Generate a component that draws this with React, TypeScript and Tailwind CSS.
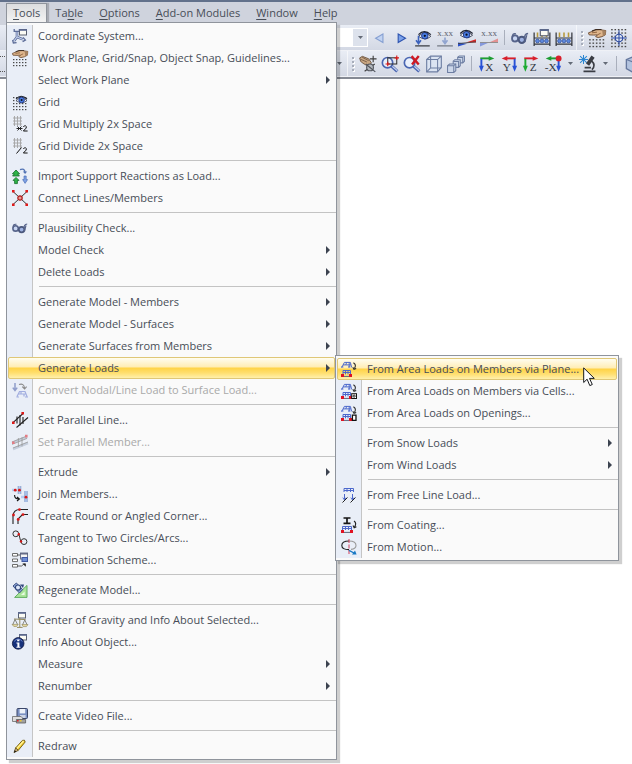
import type { ReactNode } from "react";
import clsx from "clsx";

const Icon = ({ children, size = 16 }: { children: ReactNode; size?: 16 | 18 }) => (
  <svg
    className={clsx("shrink-0 overflow-visible", size === 18 ? "size-[18px]" : "size-4")}
    viewBox="0 0 16 16"
    fill="none"
    aria-hidden="true"
  >
    {children}
  </svg>
);

/* shared fragments */

const Dots = ({ from = 6 }: { from?: number }) => (
  <g fill="#4a4a4a">
    {[0, 3, 6, 9, 12, 15]
      .filter((y) => y >= from)
      .map((y) =>
        [1, 4, 7, 10, 13].map((x) => <rect key={`${x}-${y}`} x={x} y={y} width="1.4" height="1.2" />),
      )}
  </g>
);

const Eye = ({ x = 0, y = 0 }: { x?: number; y?: number }) => (
  <g transform={`translate(${x} ${y})`}>
    <path d="M0 5.5Q5 0 11 5.5Q6 10 0 5.5Z" fill="#f4f6fb" stroke="#3a4050" strokeWidth=".8" />
    <circle cx="5.6" cy="5" r="2.8" fill="#4a7de0" stroke="#213a8c" strokeWidth=".9" />
    <circle cx="5.6" cy="5" r="1" fill="#0b1020" />
    <path d="M0 4Q5 -1.5 11 4" stroke="#1d2230" strokeWidth="1.1" />
  </g>
);

const Hand = () => (
  <>
    <path
      d="M0.4 3.4L3.5 2.2L7 0.8L10.5 0.6L15.8 1.4L15.4 5.2L12.4 6.8L9 7.6L6.8 6.8L8.4 5.2L5 5.4L1 5.2Z"
      fill="#dfb68c"
      stroke="#6a4a31"
      strokeWidth=".8"
    />
    <path d="M3.5 3.4L8 2.8M8.4 5.2L11.2 3.8" stroke="#8a5e3a" strokeWidth=".8" />
    <path d="M12.6 1L15.8 1.4V5L13.2 6.2Z" fill="#a78361" />
    <path d="M3.5 1.8L7 .5H12" stroke="#3c2b20" strokeWidth=".9" />
  </>
);

const Window = ({ x = 8, y = 1 }: { x?: number; y?: number }) => (
  <g transform={`translate(${x} ${y})`}>
    <rect x=".5" y=".5" width="7" height="5.5" fill="#fbfbf4" stroke="#5a6070" />
    <path d="M0 1h8" stroke="#5c6a92" strokeWidth="1.6" />
  </g>
);

const Glasses = () => (
  <>
    <circle cx="3.6" cy="8.4" r="2.7" fill="#c9d6f2" stroke="#56638a" strokeWidth="1.6" />
    <circle cx="9.6" cy="9.6" r="2.8" fill="#9eb2e2" stroke="#4a577c" strokeWidth="1.8" />
    <path
      d="M1.2 7.4Q1 3.6 4.4 4.4M6.2 8.2Q7 7 7.6 8.6M12.2 9Q11.4 4.4 15.2 4M12.4 11.6L14 5.4"
      stroke="#56638a"
      strokeWidth="1.2"
    />
  </>
);

const LoadFrame = () => (
  <>
    <path
      d="M.8 6.4L3.4 1.4H9.4L10.6 6.4M2 3.9H10M5.6 1.4L4.8 3.9M8.2 1.4V6.2M0 6h2.4M7 6h2.4"
      stroke="#4c68cc"
    />
    <path d="M2 13V9.5H9.5V13M2 11.5H9.5M4.5 9.5V13.4M7 9.5V13.4" stroke="#4c68cc" />
    <path d="M0 13h3v3H0zM8 13h3v3H8z" fill="#e01222" />
    <path d="M3 15.4h5" stroke="#5a6278" />
  </>
);

const Turn = () => (
  <path d="M12.4 1.8Q15.8 3.6 13.4 7.6M11.8 6.2L13 8.4L15.2 7.4" stroke="#2b2b2b" strokeWidth="1.1" />
);

const Grille = () => (
  <path d="M1 2h9M1 5h9M1 8h9M2.5 0v10M5.5 0v10M8.5 0v10" stroke="#a3a3a3" strokeWidth=".9" />
);

const Two = () => (
  <path d="M11.4 10.8Q12 9.6 13.4 9.8Q15.2 10.4 14 12.2L11.4 15H15.6" stroke="#111" />
);

const Floor = () => (
  <>
    <path d="M1 3v12M15 3v12M1 8h14M1 13.5h14" stroke="#33363e" strokeWidth="1.1" />
    <path d="M4 3v4M8 3v4M12 3v4" stroke="#b79a3d" strokeWidth="1.4" />
    <g fill="#5c88de" stroke="#2a4794" strokeWidth=".6">
      <circle cx="4" cy="10.6" r="1.7" />
      <circle cx="8" cy="10.6" r="1.7" />
      <circle cx="12" cy="10.6" r="1.7" />
    </g>
  </>
);

/* menu icons */

const icons = {
  coordinate: (
    <Icon>
      <path d="M5 9V3M5 9L11 11.4M5 9L2 13" stroke="#5c6c98" strokeWidth="2.6" />
      <path d="M5 9V3.4M5 9L11 11.4M5 9L2 13" stroke="#c5d2f0" strokeWidth="1.1" />
      <path d="M2.2 1V3.4H7.4V1M.6 12L1.4 15L4.6 14.6M11 9.4L13.4 12L10.6 13.6" stroke="#5c6c98" strokeWidth="1.3" />
      <Window x={7} y={1} />
    </Icon>
  ),
  workPlane: (
    <Icon>
      <Hand />
      <Dots from={9} />
    </Icon>
  ),
  grid: (
    <Icon>
      <Dots from={3} />
      <Eye x={4} y={1} />
    </Icon>
  ),
  gridMultiply: (
    <Icon>
      <Grille />
      <path d="M4.5 12.5h6M5.5 10.5l4 4M9.5 10.5l-4 4" stroke="#111" strokeWidth=".9" />
      <Two />
    </Icon>
  ),
  gridDivide: (
    <Icon>
      <Grille />
      <path d="M4.5 15.5L9.5 9.5" stroke="#111" />
      <Two />
    </Icon>
  ),
  importReactions: (
    <Icon>
      <path d="M4 2L7.6 5.8H5.6L7.4 8H.6L2.4 5.8H.4Z" fill="#2db648" stroke="#146b27" strokeWidth=".8" />
      <path d="M4 9.4L7 12.4H5.4V15.6H2.6V12.4H1Z" fill="#2db648" stroke="#146b27" strokeWidth=".8" />
      <path d="M8 1.6Q12.5 0 13 4" stroke="#5273b4" strokeWidth="1.4" />
      <path d="M10.8 3.4H15.2L13.1 6Z" fill="#5273b4" />
      <path d="M12 8H14.2V11.6H15.6L13.1 15.4L10.6 11.6H12Z" fill="#7fa2e4" stroke="#3c62ae" strokeWidth=".6" />
    </Icon>
  ),
  connect: (
    <Icon>
      <path d="M1 1.5L15 14.5M15 1.5L1 14.5" stroke="#333" />
      <circle cx="8" cy="8" r="2.2" fill="#e39a93" stroke="#b11a1a" strokeWidth="1.2" />
      <path d="M0 0h2.6v2.6H0zM13.4 0H16v2.6h-2.6zM0 13.4h2.6V16H0zM13.4 13.4H16V16h-2.6z" fill="#df1a1a" />
    </Icon>
  ),
  glasses: (
    <Icon>
      <Glasses />
    </Icon>
  ),
  convert: (
    <Icon>
      <path d="M3 1v7M0.8 5.6L3 8.6L5.2 5.6" stroke="#8f9dca" strokeWidth="1.5" />
      <path d="M7 2.5Q12 1 12.5 6M10.2 4.6L12.6 7L14.6 4.6" stroke="#8a8a8a" strokeWidth="1.1" />
      <path d="M5 14.5L7.5 9.5H13L15 14.5M6.4 12H14M9 9.5V12M12 12V14.5M4.4 15h2.6M13 15h3" stroke="#a2aee0" strokeWidth="1.2" />
    </Icon>
  ),
  parallelLine: (
    <Icon>
      <path d="M1 10.6L11 1.5M4.5 15.5L16 5.5" stroke="#222" strokeWidth="1.1" />
      <path d="M5 4.5V11.5M8 3V13.5M11 5V12" stroke="#222" strokeWidth="1.1" />
      <path d="M0 9.4h2.6V12H0zM9.4 0H12v2.6H9.4z" fill="#dc1818" />
    </Icon>
  ),
  parallelMember: (
    <Icon>
      <path d="M0 9L15 3M1 15L16 9" stroke="#c5cedd" strokeWidth="2.6" />
      <path d="M0 8L15 2M0 10.4L15 4.4M1 14L16 8M6.4 4V13M10 3.4V12.4" stroke="#9a9a9a" strokeWidth=".8" />
      <path d="M0 7.4h2.6V10H0zM13 0.8h2.6v2.6H13z" fill="#e27d85" />
    </Icon>
  ),
  join: (
    <Icon>
      <path d="M7.5 0v8M0 4h5M14 5v11M9 11h4" stroke="#b4cdf2" strokeWidth="2.4" />
      <path d="M6.2 0v8M8.8 0v8M12.8 5v11M15.2 5v11" stroke="#6f8abf" strokeWidth=".7" />
      <circle cx="3.2" cy="4.2" r="1.4" fill="#da1717" />
      <circle cx="7.4" cy="4.2" r="1.4" fill="#da1717" />
      <circle cx="14" cy="11.2" r="1.4" fill="#da1717" />
      <path d="M2.6 9Q2.4 13 7 13M5 11L7.4 13L5 15" stroke="#151515" strokeWidth="1.1" />
    </Icon>
  ),
  corner: (
    <Icon>
      <path d="M1 16V8Q1.5 1.5 8 1.5H16M6 16V11L10.5 6.5H16" stroke="#222" strokeWidth="1.1" />
      <g fill="#da1717">
        <circle cx="1.5" cy="7" r="1.4" />
        <circle cx="7.5" cy="1.6" r="1.4" />
        <circle cx="6.2" cy="11.4" r="1.4" />
        <circle cx="11" cy="6.6" r="1.4" />
      </g>
    </Icon>
  ),
  tangent: (
    <Icon>
      <circle cx="3.8" cy="3.8" r="2.9" stroke="#333" />
      <circle cx="12" cy="11.6" r="2.9" stroke="#333" />
      <path d="M6.6 3L9 12.5" stroke="#333" />
      <circle cx="6.8" cy="4.2" r="1.2" fill="#da1717" />
      <circle cx="9" cy="11.4" r="1.2" fill="#da1717" />
    </Icon>
  ),
  combination: (
    <Icon>
      <path d="M.5 1.5h5v2.6h-5zM.5 7h5v2.6h-5zM.5 12.5h5v2.6h-5z" fill="#fff" stroke="#5e5e5e" strokeWidth=".9" />
      <path d="M5.5 3H8M5.5 14H9.5L12.5 11.6" stroke="#4e4e4e" strokeWidth=".9" />
      <rect x="8.5" y="1" width="7" height="6" fill="#f5f5f5" stroke="#6d748c" />
      <path d="M8 1.8h8" stroke="#5d6480" strokeWidth="1.4" />
      <rect x="10" y="5.5" width="5.5" height="4" fill="#6c8cd6" stroke="#3f58a2" />
      <path d="M10.4 11.4h3.4V14.8z" fill="#222" />
    </Icon>
  ),
  regenerate: (
    <Icon>
      <path d="M15 3.4V15.4H2.6Z" fill="#a9e59a" stroke="#62ad62" />
      <path d="M12.6 9.4V13H9Z" fill="#eafbe4" />
      <path d="M1 4L4.4 1L10.6 7.6L7.4 11Z" fill="#8ea8d8" stroke="#3f5286" />
      <circle cx="6" cy="5.6" r="2.6" fill="#dde7f9" stroke="#33487e" strokeWidth="1.2" />
      <path d="M8 2.4L12 2.4L11 6" fill="#33487e" />
    </Icon>
  ),
  gravity: (
    <Icon>
      <Window x={6} y={0} />
      <path d="M2 7L13.6 7.6M7.8 5.6v9.6M5 15.4h5.6" stroke="#948a5c" />
      <path d="M3 7.4L0.8 12.6M3 7.4L5.6 12.6M12.8 8L10.4 13M12.8 8L15.2 13" stroke="#6c6c62" strokeWidth=".8" />
      <path d="M0 12.4h6.2L4.6 14.4H1.8ZM9.8 12.6h6.2l-1.6 2h-3.2z" fill="#eadd9f" stroke="#8a8052" strokeWidth=".6" />
    </Icon>
  ),
  info: (
    <Icon>
      <Window x={7} y={0} />
      <circle cx="6.2" cy="9.4" r="5.8" fill="#17327c" stroke="#0a1238" strokeWidth=".8" />
      <path d="M2.2 7.4Q6 2.6 10.4 7.4" stroke="#7c97de" strokeWidth=".8" />
      <path d="M5.2 5.4h2.2v1.8H5.2zM4.4 8.4h3v4.4h1v1H4.4v-1h1V9.4h-1z" fill="#fff" />
    </Icon>
  ),
  video: (
    <Icon>
      <rect x="5" y="0.5" width="10.5" height="10" rx="1" fill="#7a90c2" stroke="#3a4668" />
      <path d="M7.6 1h5.6v4.4H7.6z" fill="#edf2fa" />
      <path d="M8 7h5.6v3H8z" fill="#ccd4e6" />
      <path d="M0.5 8.5h8.6l1.4 1.5v3.5H0.5z" fill="#dedede" stroke="#6c6c6c" strokeWidth=".8" />
      <path d="M4.4 11.5h9.2v3.5H4.4z" fill="#a2a2a2" stroke="#5c5c5c" strokeWidth=".8" />
      <path d="M5 12h1.6v1.6H5z" fill="#d22" />
      <path d="M8 12h1.6v1.6H8z" fill="#ecc52f" />
    </Icon>
  ),
  redraw: (
    <Icon>
      <path d="M3.6 10L10.4 2.4Q13 1.2 13.2 4L6.2 12.4Z" fill="#f7d02c" stroke="#6a560f" strokeWidth=".9" />
      <path d="M4.8 10.6L11.6 3" stroke="#fff2a3" strokeWidth="1.2" />
      <path d="M3.6 10L2 14.6L6.2 12.4Z" fill="#e5c28d" stroke="#4c3d0c" strokeWidth=".8" />
      <path d="M2 14.6L2.8 12.2L4.4 13.4Z" fill="#111" />
    </Icon>
  ),
  loadPlane: (
    <Icon>
      <LoadFrame />
      <Turn />
    </Icon>
  ),
  loadCells: (
    <Icon>
      <LoadFrame />
      <Turn />
      <rect x="10.7" y="10.7" width="4.8" height="4.8" fill="#fff" stroke="#111" />
      <circle cx="13.1" cy="13.1" r="1.1" stroke="#111" strokeWidth=".9" />
    </Icon>
  ),
  loadOpenings: (
    <Icon>
      <LoadFrame />
      <Turn />
      <path d="M11.4 10.2h3.6v5.2h-3.6z" fill="#fff" stroke="#111" strokeWidth="1.3" />
    </Icon>
  ),
  freeLine: (
    <Icon>
      <path d="M3 5V1.5H12.5V5M3 3.5H12.5M6 1.5V5M9.5 1.5V5M3.5 7v5.5M11.5 7v5.5" stroke="#4c68cc" />
      <path d="M1.8 10.6L3.5 13L5 10.6M9.8 10.6L11.5 13L13 10.6" stroke="#4c68cc" strokeWidth=".9" />
      <path d="M1.5 15.5L6.5 10.5M9.5 15.5L14.5 10.5" stroke="#222" />
    </Icon>
  ),
  coating: (
    <Icon>
      <path d="M2.5 1h7M2.5 6.4h7M6 1v5" stroke="#151515" strokeWidth="1.7" />
      <path d="M1.5 13V9.5H10.5V13M1.5 11.5H10.5M4.5 9.5V13M7.5 9.5V13" stroke="#4c68cc" />
      <path d="M0 13h3v3H0zM9 13h3v3H9z" fill="#e01222" />
      <path d="M3 15.4h6" stroke="#5a6278" />
      <path d="M13 4Q16 6 13.6 10M12 8.6L13.2 10.8L15.4 9.8" stroke="#222" strokeWidth="1.1" />
    </Icon>
  ),
  motion: (
    <Icon>
      <path d="M8 10.6Q0.8 10.6 0.8 6.4Q0.8 2 8 2" stroke="#222" strokeWidth="1.1" />
      <path d="M8 2Q15 2 15 6.4Q15 9.6 10 10.4" stroke="#9a9a9a" strokeWidth="1.1" />
      <path d="M8 0V16" stroke="#cf2b4a" strokeDasharray="4 1.5" strokeWidth=".9" />
      <path d="M8 11.4L13 14" stroke="#1878c4" strokeWidth="1.4" />
      <path d="M11 15.5H15.6L14 11.4Z" fill="#1878c4" />
    </Icon>
  ),
};

type Entry = {
  label: string;
  icon?: keyof typeof icons;
  sub?: boolean;
  disabled?: boolean;
  active?: boolean;
};

const toolsMenu: Entry[][] = [
  [
    { label: "Coordinate System...", icon: "coordinate" },
    { label: "Work Plane, Grid/Snap, Object Snap, Guidelines...", icon: "workPlane" },
    { label: "Select Work Plane", sub: true },
    { label: "Grid", icon: "grid" },
    { label: "Grid Multiply 2x Space", icon: "gridMultiply" },
    { label: "Grid Divide 2x Space", icon: "gridDivide" },
  ],
  [
    { label: "Import Support Reactions as Load...", icon: "importReactions" },
    { label: "Connect Lines/Members", icon: "connect" },
  ],
  [
    { label: "Plausibility Check...", icon: "glasses" },
    { label: "Model Check", sub: true },
    { label: "Delete Loads", sub: true },
  ],
  [
    { label: "Generate Model - Members", sub: true },
    { label: "Generate Model - Surfaces", sub: true },
    { label: "Generate Surfaces from Members", sub: true },
    { label: "Generate Loads", sub: true, active: true },
    { label: "Convert Nodal/Line Load to Surface Load...", icon: "convert", disabled: true },
  ],
  [
    { label: "Set Parallel Line...", icon: "parallelLine" },
    { label: "Set Parallel Member...", icon: "parallelMember", disabled: true },
  ],
  [
    { label: "Extrude", sub: true },
    { label: "Join Members...", icon: "join" },
    { label: "Create Round or Angled Corner...", icon: "corner" },
    { label: "Tangent to Two Circles/Arcs...", icon: "tangent" },
    { label: "Combination Scheme...", icon: "combination" },
  ],
  [{ label: "Regenerate Model...", icon: "regenerate" }],
  [
    { label: "Center of Gravity and Info About Selected...", icon: "gravity" },
    { label: "Info About Object...", icon: "info" },
    { label: "Measure", sub: true },
    { label: "Renumber", sub: true },
  ],
  [{ label: "Create Video File...", icon: "video" }],
  [{ label: "Redraw", icon: "redraw" }],
];

const loadsMenu: Entry[][] = [
  [
    { label: "From Area Loads on Members via Plane...", icon: "loadPlane", active: true },
    { label: "From Area Loads on Members via Cells...", icon: "loadCells" },
    { label: "From Area Loads on Openings...", icon: "loadOpenings" },
  ],
  [
    { label: "From Snow Loads", sub: true },
    { label: "From Wind Loads", sub: true },
  ],
  [{ label: "From Free Line Load...", icon: "freeLine" }],
  [
    { label: "From Coating...", icon: "coating" },
    { label: "From Motion...", icon: "motion" },
  ],
];

const MenuRow = ({ item }: { item: Entry }) => (
  <button
    type="button"
    disabled={item.disabled}
    className={clsx(
      "flex h-[22px] w-full items-center rounded-[2px] border pr-1 pl-[3px] text-left whitespace-nowrap",
      item.active
        ? "border-[#dfc777] bg-[linear-gradient(#fffdf0,#ffedb4_45%,#ffd346_50%,#ffdf70_75%,#fff0ac)]"
        : "border-transparent",
      item.disabled ? "text-[#a9a9a9]" : "text-[#474d57]",
    )}
  >
    {item.icon ? icons[item.icon] : <span className="w-4" />}
    <span className="ml-[10px] grow">{item.label}</span>
    {item.sub && (
      <svg className="h-2 w-1" viewBox="0 0 4 8" aria-hidden="true">
        <path d="M0 0L4 4L0 8Z" fill="#3c4350" />
      </svg>
    )}
  </button>
);

const Menu = ({ groups, label }: { groups: Entry[][]; label: string }) => (
  <div className="border border-[#8f949c] bg-[#fafafa] py-[2px] shadow-[3px_3px_1px_#00000030]">
    <ul
      aria-label={label}
      className="bg-[linear-gradient(90deg,#e9eef7_25px,#c5c5c5_25px,#c5c5c5_26px,#fafafa_26px)]"
    >
      {groups.map((group, i) => (
        <li key={group[0].label}>
          {i > 0 && (
            <div className="h-2 pt-[3px] pl-8">
              <hr className="border-[#c3c3c3]" />
            </div>
          )}
          <ul className="px-px">
            {group.map((item) => (
              <li key={item.label}>
                <MenuRow item={item} />
              </li>
            ))}
          </ul>
        </li>
      ))}
    </ul>
  </div>
);

/* toolbars */

const Tool = ({ label, children }: { label: string; children: ReactNode }) => (
  <button type="button" aria-label={label} className="flex h-6 w-[22px] shrink-0 items-center justify-center">
    <Icon size={18}>{children}</Icon>
  </button>
);

const Caret = ({ label }: { label: string }) => (
  <button type="button" aria-label={label} className="flex h-6 w-[13px] shrink-0 items-center justify-center">
    <svg className="h-[3px] w-[5px]" viewBox="0 0 5 3">
      <path d="M0 0H5L2.5 3Z" fill="#636a76" />
    </svg>
  </button>
);

const Divider = () => <span className="mx-1 h-[15px] w-px shrink-0 bg-[#a9afbc]" />;

const Grip = () => (
  <span className="mr-[3px] ml-1 flex shrink-0 flex-col gap-[2px]">
    {[0, 1, 2, 3].map((n) => (
      <span key={n} className="size-[2px] bg-[#a7adba] shadow-[1px_1px_0_#fff]" />
    ))}
  </span>
);

const Values = () => (
  <text x="8" y="6" textAnchor="middle" fill="#5c626e" fontSize="8" fontFamily="Liberation Serif, serif">
    x.xx
  </text>
);

type AxisProps = { name: string; h: string; v: string; flip?: boolean };

const Axis = ({ name, h, v, flip }: AxisProps) => (
  <>
    <g transform={flip ? "translate(16 0) scale(-1 1)" : undefined}>
      <path d="M2 3H11" stroke={h} strokeWidth="1.7" />
      <path d="M9.5 .8L14.5 3L9.5 5.2Z" fill={h} />
      <path d="M3 3.5V11" stroke={v} strokeWidth="1.7" />
      <path d="M.8 9.6H5.2L3 14.8Z" fill={v} />
    </g>
    <text
      x={flip ? 6 : 10}
      y="14"
      textAnchor="middle"
      fill="#33373f"
      fontSize="10"
      fontFamily="Liberation Serif, serif"
    >
      {name}
    </text>
  </>
);

const Magnifier = () => (
  <>
    <path d="M9.5 10L14.5 14.5" stroke="#4a66b2" strokeWidth="2.8" />
    <path d="M10 10L14.5 14" stroke="#c5d2f0" />
    <circle cx="5.8" cy="6.8" r="4.6" fill="#eaf0fb" stroke="#4a66b2" strokeWidth="1.5" />
  </>
);

const strip =
  "flex h-[26px] items-center overflow-hidden border-b border-[#eff1f6] bg-linear-to-b from-[#e9edf5] to-[#d3d8e4]";

const DisplayToolbar = () => (
  <div className={strip}>
    <div className="relative ml-[200px] flex h-[19px] w-[168px] shrink-0">
      <select
        aria-label="Load case"
        className="h-full w-full appearance-none border border-white bg-white"
      />
      <span className="pointer-events-none absolute inset-y-px right-px flex w-[14px] items-center justify-center bg-[#dde2ec]">
        <svg className="h-[3px] w-[5px]" viewBox="0 0 5 3">
          <path d="M0 0H5L2.5 3Z" fill="#636a76" />
        </svg>
      </span>
    </div>
    <Tool label="Previous">
      <path d="M11.5 4.5V12L5 8.2Z" fill="#c1d3f2" stroke="#86a0d2" />
    </Tool>
    <Tool label="Next">
      <path d="M5.5 4.5V12L12 8.2Z" fill="#7ba2ea" stroke="#2f55b0" />
    </Tool>
    <Tool label="Show loads">
      <Eye x={4} y={1} />
      <path d="M4 6V12M1.8 10L4 13L6.2 10" stroke="#3c62bc" strokeWidth="1.4" />
      <path d="M1 15h13" stroke="#44474e" strokeWidth="1.2" />
    </Tool>
    <Tool label="Show load values">
      <Values />
      <path d="M8 7.5V12M5.8 10L8 13L10.2 10" stroke="#91a5d0" strokeWidth="1.5" />
      <path d="M1 15h14" stroke="#7c818c" strokeWidth="1.2" />
    </Tool>
    <Tool label="Show results">
      <Eye x={2} y={0} />
      <path d="M0 15.5V12L8 13Z" fill="#2c51c8" />
      <path d="M7 12L16 9V12Z" fill="#dc2525" />
      <path d="M0 13L16 11.4" stroke="#444" strokeWidth=".8" />
    </Tool>
    <Tool label="Show result values">
      <Values />
      <path d="M0 15.5V12L8 12Z" fill="#8498dc" />
      <path d="M8 12L16 8.5V12Z" fill="#e39191" />
      <path d="M0 12H16" stroke="#8a8a8a" strokeWidth=".8" />
    </Tool>
    <Divider />
    <Tool label="Plausibility check">
      <Glasses />
    </Tool>
    <Tool label="Calculation table">
      <Floor />
      <Window x={6} y={0} />
    </Tool>
    <Tool label="Tables">
      <Floor />
    </Tool>
    <span className="ml-px h-full w-px shrink-0 bg-white/60" />
    <Grip />
    <Tool label="Work plane">
      <Hand />
      <Dots from={9} />
    </Tool>
    <Tool label="Snap">
      <Dots from={0} />
      <circle cx="8" cy="8" r="3.3" fill="#e3e8f2" stroke="#2c4ba3" />
      <path d="M8 1V15M1 8H15" stroke="#2c4ba3" strokeWidth=".9" />
    </Tool>
  </div>
);

const ViewToolbar = () => (
  <div className={strip}>
    <span className="h-4 w-[7px] shrink-0 border-y border-dotted border-[#555]" />
    <span className="w-[326px] shrink-0" />
    <Caret label="More" />
    <span className="ml-px h-full w-px shrink-0 bg-white/60" />
    <Grip />
    <Tool label="Edit grid">
      <path
        d="M0.6 2.6L3 1.2L8.6 3.4L11 7L9 9.6L6 8.8L3.6 7.4L1.4 5.6Z"
        fill="#c9a783"
        stroke="#6b5340"
        strokeWidth=".8"
      />
      <path d="M1.4 3.8L7 6.2M2.8 2L8.6 5" stroke="#6b5340" strokeWidth=".7" />
      <path d="M9.6 3.4H15.6M12.6 .6V6.4M5 14.5L14 8" stroke="#3f3f3f" />
      <circle cx="9.8" cy="11" r="3" fill="#b3b8be" stroke="#50545c" />
      <path d="M6 8L14.5 15" stroke="#50545c" />
    </Tool>
    <Tool label="Zoom window">
      <Magnifier />
      <rect x="6" y="2.5" width="8" height="5.5" stroke="#2b2b2b" strokeWidth=".9" />
      <path d="M4 8h4M6 6v4M12 2.5h4M14 .5v4" stroke="#dc1818" />
    </Tool>
    <Tool label="Zoom all">
      <Magnifier />
      <path d="M7.6 1L14 8.4M14 .8L8 8.4" stroke="#ce1a24" strokeWidth="2.1" />
    </Tool>
    <Tool label="Show cube">
      <path d="M1.5 4L5 1H14.5V11L11 15H1.5Z" fill="#dbe4f2" stroke="#6d7ea2" />
      <path d="M1.5 4H11.2L14.5 1M11.2 4V15M5 1V11.5H14.5M5 11.5L1.5 15" stroke="#6d7ea2" strokeWidth=".9" />
    </Tool>
    <Tool label="Show blocks">
      <g fill="#cdd8ea" stroke="#6d7ea2" strokeWidth=".9">
        <path d="M9.5 2L11 0.8H15.5V5.5L14 7H9.5Z" />
        <path d="M5.5 5.5L7 4.2H11.8V9.5L10.3 11H5.5Z" />
        <path d="M0.5 9.5L2.3 8H7.8V14L6 15.5H0.5Z" />
        <path d="M0.5 9.5H6V15.5M6 9.5L7.8 8M5.5 5.8H10.3V11M9.5 2.2H14V7" fill="none" />
      </g>
    </Tool>
    <Divider />
    <Tool label="View in X">
      <Axis name="X" h="#1d9d32" v="#2851d6" />
    </Tool>
    <Tool label="View in Y">
      <Axis name="Y" h="#d81f2b" v="#2851d6" flip />
    </Tool>
    <Tool label="View in Z">
      <Axis name="Z" h="#d81f2b" v="#1dab32" />
    </Tool>
    <Tool label="View in -X">
      <Axis name="-X" h="#1d9d32" v="#2851d6" flip />
      <circle cx="13" cy="3" r="2.6" fill="#d81f2b" />
    </Tool>
    <Caret label="More views" />
    <Tool label="Inspect">
      <path d="M1 1L7 7M7 1L1 7M4 0V8M0 4H8" stroke="#2a86d2" strokeWidth=".9" />
      <path d="M12.5 1.5L7.6 8.6" stroke="#3a3d44" strokeWidth="3.4" />
      <path d="M11 5Q15.4 9 11.5 13M4 14.6H14.6M5 11.2H10.6" stroke="#3a3d44" strokeWidth="1.5" />
    </Tool>
    <Caret label="More inspections" />
    <Divider />
    <Tool label="Solid view">
      <path d="M3 4L9 1.5L16 3V14L8 15L3 12Z" fill="#b3c3df" stroke="#66789e" strokeWidth="1.2" />
      <path d="M3 4L8.5 6L16 3M8.5 6V15" stroke="#66789e" />
    </Tool>
  </div>
);

const menus = [
  { pre: "Ta", key: "b", post: "le" },
  { pre: "", key: "O", post: "ptions" },
  { pre: "", key: "A", post: "dd-on Modules" },
  { pre: "", key: "W", post: "indow" },
  { pre: "", key: "H", post: "elp" },
];

const MenuBar = () => (
  <nav className="flex h-[25px] items-start border-t-2 border-[#62718b] bg-[#cfd3dd] pl-[6px] text-[#474d57]">
    <div className="relative mt-px">
      <button
        type="button"
        className="h-5 border border-b-0 border-[#8f949c] bg-linear-to-b from-[#dcdddf] to-[#f4f4f4] px-[6px] pb-px shadow-[2px_0_1px_#00000030]"
      >
        <u className="underline-offset-2">T</u>ools
      </button>
      <div className="absolute top-[19px] left-0 z-10 w-[331px]">
        <Menu groups={toolsMenu} label="Tools" />
        <div className="absolute top-[333px] left-[329px] w-[284px]">
          <Menu groups={loadsMenu} label="Generate Loads" />
          <svg className="absolute top-3 left-[248px] h-[20px] w-[13px]" viewBox="0 0 13 20" aria-hidden="true">
            <path
              d="M.7 .9V15.5L4.1 12.2L6.8 18.6L9.3 17.5L6.5 11.4H11.3Z"
              fill="#fff"
              stroke="#17191d"
              strokeWidth="1"
            />
          </svg>
        </div>
      </div>
    </div>
    <div className="flex">
      {menus.map((m) => (
        <button key={m.key} type="button" className="mt-px h-5 px-2 pb-px whitespace-nowrap">
          {m.pre}
          <u className="underline-offset-2">{m.key}</u>
          {m.post}
        </button>
      ))}
    </div>
  </nav>
);

export default function App() {
  return (
    <div className="min-h-screen overflow-x-hidden bg-white font-['Open_Sans','Noto_Sans',sans-serif] text-[11px] leading-4">
      <MenuBar />
      <header className="border-b-2 border-[#858a94]">
        <DisplayToolbar />
        <ViewToolbar />
      </header>
      <main />
    </div>
  );
}
